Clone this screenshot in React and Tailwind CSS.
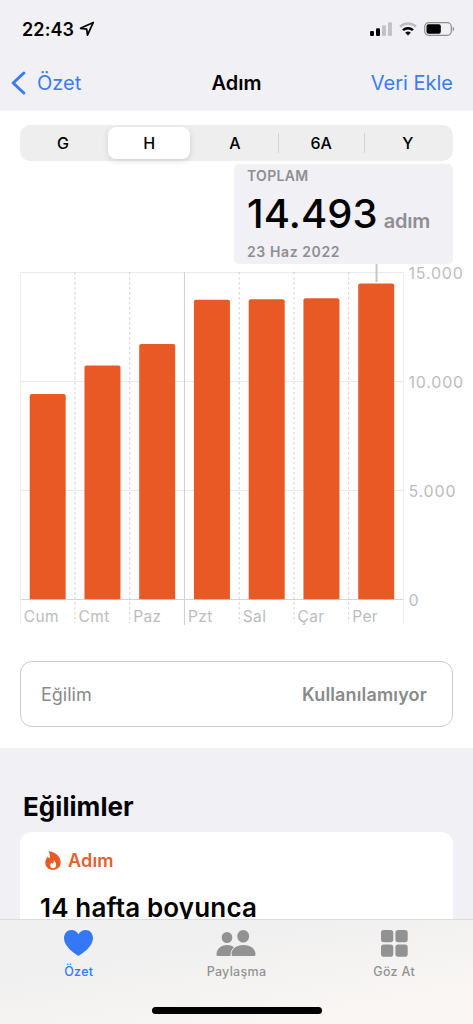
import clsx from 'clsx';

const ranges = ['G', 'H', 'A', '6A', 'Y'];

const days = [
  { label: 'Cum', top: 130 },
  { label: 'Cmt', top: 101.5 },
  { label: 'Paz', top: 80 },
  { label: 'Pzt', top: 35.7 },
  { label: 'Sal', top: 35.2 },
  { label: 'Çar', top: 34.3 },
  { label: 'Per', top: 19.5 },
];

const ticks = [
  { label: '15.000', y: 8.5 },
  { label: '10.000', y: 117.5 },
  { label: '5.000', y: 226.5 },
  { label: '0', y: 335.5 },
];

const COL = 54.75;

function StatusBar() {
  return (
    <div className="flex h-[56px] items-center justify-between pl-[22px] pr-[18px] pt-[2px]">
      <div className="flex items-center gap-[5px]">
        <span className="text-[18px] font-semibold tracking-[0.1px]">22:43</span>
        <svg width="16" height="16" viewBox="0 0 16 16" fill="none" stroke="#000" strokeWidth="1.7" strokeLinejoin="round">
          <path d="M14.3 1.4 1.6 7.3l6.1.9.8 6z" />
        </svg>
      </div>
      <div className="flex items-center gap-[7px]">
        <svg width="22" height="14" viewBox="0 0 22 14">
          <rect x="0" y="9" width="4" height="5" rx="1.2" />
          <rect x="6" y="6.3" width="4" height="7.7" rx="1.2" />
          <rect x="12" y="3.3" width="4" height="10.7" rx="1.2" fill="#c3c3c7" />
          <rect x="18" y="0.3" width="4" height="13.7" rx="1.2" fill="#c3c3c7" />
        </svg>
        <svg width="18" height="14" viewBox="0 0 18 14" fill="none" strokeWidth="2.5">
          <path d="M1 4.7a11.6 11.6 0 0 1 16 0" stroke="#bdbdc1" />
          <path d="M4 8.1a7.4 7.4 0 0 1 10 0" stroke="#000" />
          <path d="M6.2 10.7a4.2 4.2 0 0 1 5.6 0L9 13.5z" fill="#000" />
        </svg>
        <svg width="31" height="14" viewBox="0 0 31 14">
          <rect x="0.7" y="0.7" width="26.6" height="12.6" rx="4" fill="none" stroke="#8f8f93" strokeWidth="1.2" />
          <rect x="2.5" y="2.3" width="14.3" height="9.4" rx="2" />
          <path d="M28.7 4.7c1.9.7 1.9 3.9 0 4.6z" fill="#8f8f93" />
        </svg>
      </div>
    </div>
  );
}

function NavBar() {
  return (
    <div className="grid h-[54px] grid-cols-3 items-center pl-[11px] pr-[20px] text-[20px]">
      <button className="flex items-center gap-[11px] text-[#3a7cf3]">
        <svg width="15" height="24" viewBox="0 0 15 24" fill="none" stroke="currentColor" strokeWidth="3" strokeLinecap="round" strokeLinejoin="round">
          <path d="M12.8 2 2.2 12l10.6 10" />
        </svg>
        <span>Özet</span>
      </button>
      <h1 className="pl-[9px] text-center font-semibold">Adım</h1>
      <button className="whitespace-nowrap text-right text-[#3a7cf3]">Veri Ekle</button>
    </div>
  );
}

function Segments() {
  return (
    <div className="grid h-[36px] grid-cols-5 rounded-[10px] bg-[#eeeeef] pr-[2px] text-[16px] font-medium">
      {ranges.map((item, i) => (
        <div key={item} className="flex items-center">
          <div
            className={clsx(
              'flex h-[32px] flex-1 items-center justify-center',
              i === 1 && 'mx-[2px] rounded-[8px] bg-white shadow-[0_2px_6px_rgba(0,0,0,0.13)]'
            )}
          >
            {item}
          </div>
          {(i === 2 || i === 3) && <span className="h-[20px] w-px bg-[#d3d3d5]" />}
        </div>
      ))}
    </div>
  );
}

function Chart() {
  return (
    <svg className="block overflow-visible" width="453" height="366" viewBox="0 0 453 366" fontFamily="Inter, sans-serif">
      {ticks.map((tick) => (
        <g key={tick.label}>
          <path d={`M0 ${tick.y}H384`} stroke={tick.y > 300 ? '#d4d4d4' : '#e9e9ea'} />
          <text x="388.5" y={tick.y + 6.3} fontSize="16" letterSpacing="0.8" fill="#bcbcbf">{tick.label}</text>
        </g>
      ))}
      <path d="M.5 8V360M383.5 8V360" stroke="#ececed" />
      {days.map((day, i) => (
        <g key={day.label}>
          {i > 0 && (
            <path
              d={`M${i * COL + 0.2} 8V${i === 3 ? 361 : 359}`}
              stroke={i === 3 ? '#cfcfd1' : '#d0d0d2'}
              strokeDasharray={i === 3 ? undefined : '2.5 2.5'}
            />
          )}
          <path
            d={`M${9.7 + i * COL} 335.3V${day.top + 2}q0-2 2-2h32q2 0 2 2V335.3z`}
            fill="#e95926"
          />
          <text x={i * COL + 3.7} y="357.5" fontSize="15.5" letterSpacing="0.4" fill="#bcbcbf">{day.label}</text>
        </g>
      ))}
      <path d="M356.5 0V18" stroke="#c6c6c8" strokeWidth="2" />
    </svg>
  );
}

function TabBar() {
  return (
    <nav className="flex h-[105px] flex-col border-t border-[#dcdcdd] bg-[linear-gradient(170deg,#f0f0f0_30%,#f9f6f4_80%)] text-[12.5px] font-medium tracking-[0.3px] text-[#929292]">
      <div className="grid h-[61px] grid-cols-3">
        <div className="flex flex-col items-center pt-[10px] text-[#3478f6]">
          <svg width="29" height="26" viewBox="0 0 29 26" fill="currentColor">
            <path d="M14.5 26C12.2 24.7 0 17.3 0 8.1 0 3.5 3.2 0 7.5 0c3.1 0 5.6 1.7 7 4.3C15.9 1.7 18.4 0 21.5 0 25.8 0 29 3.5 29 8.1 29 17.3 16.8 24.7 14.5 26z" />
          </svg>
          <span className="mt-[7px]">Özet</span>
        </div>
        <div className="flex flex-col items-center pt-[10px]">
          <svg width="40" height="26" viewBox="0 0 40 26" fill="currentColor">
            <ellipse cx="11" cy="7.5" rx="5.3" ry="5.6" />
            <path d="M.5 24.5C.5 19 5 15 11 15c2.8 0 5.2.8 7 2.200-2.500 2-3.700 4.800-3.500 8.800H2.500c-1.500 0-2-.5-2-1.500z" />
            <ellipse cx="27.2" cy="6.3" rx="5.9" ry="6.3" />
            <path d="M15.5 24.2c0-5.300 5-9.200 12-9.200s12 3.900 12 9.200c0 1.300-.7 1.800-2.200 1.800H17.700c-1.500 0-2.200-.5-2.200-1.800z" />
          </svg>
          <span className="mt-[7px]">Paylaşma</span>
        </div>
        <div className="flex flex-col items-center pt-[10px]">
          <svg width="27" height="27" viewBox="0 0 27 27" fill="currentColor">
            <rect width="12.3" height="12.3" rx="2.8" />
            <rect x="14.4" width="12.3" height="12.3" rx="2.8" />
            <rect y="14.4" width="12.3" height="12.3" rx="2.8" />
            <rect x="14.4" y="14.4" width="12.3" height="12.3" rx="2.8" />
          </svg>
          <span className="mt-[6px]">Göz At</span>
        </div>
      </div>
      <div className="mx-auto mt-[26px] h-[7px] w-[170px] rounded-full bg-black" />
    </nav>
  );
}

export default function App() {
  return (
    <div className="flex h-[1024px] w-[473px] flex-col overflow-hidden bg-[#f1f0f5] font-[Inter,sans-serif] text-black">
      <header className="h-[111px] shrink-0 border-b border-[#f5f5f8]">
        <StatusBar />
        <NavBar />
      </header>

      <section className="h-[637px] shrink-0 bg-white pl-[20px] pt-[14px]">
        <div className="w-[433px]">
          <Segments />
          {/* Selected day */}
          <div className="ml-auto mt-[3px] flex h-[100px] w-[219px] flex-col rounded-[5px] bg-[#f1f0f5] pl-[13px] font-semibold text-[#8e8e93]">
            <p className="mt-[2px] text-[14px] leading-[20px] tracking-[0.3px]">TOPLAM</p>
            <p className="flex h-[55px] items-baseline gap-[6px] leading-[56px]">
              <span className="text-[40px] font-medium tracking-[0.1px] text-black">14.493</span>
              <span className="text-[20px] tracking-[-0.2px]">adım</span>
            </p>
            <p className="text-[14px] leading-[22px] tracking-[0.6px]">23 Haz 2022</p>
          </div>
        </div>
        <Chart />
        <div className="mt-[31px] flex h-[66px] w-[433px] items-center justify-between rounded-[12px] border border-[#cbcbcc] pl-[20px] pr-[25px] text-[18px] text-[#8a8a8b]">
          <span>Eğilim</span>
          <span className="font-semibold tracking-[0.15px]">Kullanılamıyor</span>
        </div>
      </section>

      <section className="min-h-0 flex-1 overflow-hidden px-[20px] pt-[42px]">
        <h2 className="pl-[3px] text-[26px] font-bold leading-[34px] tracking-[0.05px]">Eğilimler</h2>
        <div className="mt-[8px] h-[200px] rounded-[12px] bg-white pl-[20px] pt-[17px]">
          <div className="flex items-center gap-[7px] pl-[5px] text-[18px] font-semibold leading-[24px] tracking-[0.2px] text-[#e2602f]">
            <svg className="mb-[2px]" width="16" height="19" viewBox="0 0 16 19" fill="#e95926">
              <path fillRule="evenodd" d="M3.3.2C9.5.5 15.700 5 15.700 11.500c0 4.300-3.200 7.300-7.700 7.300S.3 15.900.3 11.700C.3 9 1.500 7 2.900 5.400c.5 1 .9 1.500 1.700 1.800C5.300 4.500 4.800 2.200 3.300.2zM8.900 9.300c.2 2-.5 2.900-1.400 3.500-.3-.4-.6-.8-.7-1.300-1.100 1-1.600 2-1.600 3 0 1.700 1.200 2.800 2.900 2.800s3-1.200 3-3c0-2-1-3.800-2.200-5z" />
            </svg>
            Adım
          </div>
          <p className="mt-[18px] text-[26px] font-semibold leading-[34px] tracking-[0.15px]">14 hafta boyunca</p>
        </div>
      </section>

      <TabBar />
    </div>
  );
}
